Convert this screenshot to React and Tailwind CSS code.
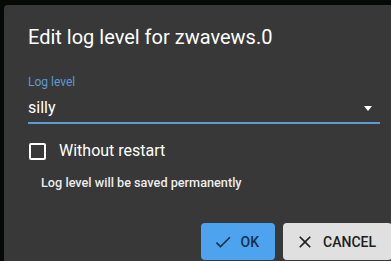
import React, { useState } from 'react';

function CheckIcon() {
  return (
    <svg viewBox="0 0 24 24" className="w-5 h-5" fill="currentColor">
      <path d="M9 16.17 4.83 12l-1.42 1.41L9 19 21 7l-1.41-1.41z" />
    </svg>
  );
}

function CloseIcon() {
  return (
    <svg viewBox="0 0 24 24" className="w-5 h-5" fill="currentColor">
      <path d="M19 6.41 17.59 5 12 10.59 6.41 5 5 6.41 10.59 12 5 17.59 6.41 19 12 13.41 17.59 19 19 17.59 13.41 12z" />
    </svg>
  );
}

export default function App() {
  const [noRestart, setNoRestart] = useState(false);

  return (
    <div
      className="w-[391px] h-[261px] overflow-hidden bg-[#060a06] pl-1 pt-[5px]"
      style={{ fontFamily: 'Roboto, "Liberation Sans", sans-serif' }}
    >
      {/* Dialog */}
      <div className="w-[400px] h-[300px] bg-[#383838] rounded-tl text-white">
        <h2 className="px-6 pt-4 pb-4 text-xl leading-8 font-normal">Edit log level for zwavews.0</h2>

        <div className="px-6">
          {/* Select */}
          <div className="mt-[5px] text-xs leading-4 text-[#5d9bd3]">Log level</div>
          <div className="flex items-center justify-between pt-[6px] pb-[2px] border-b-2 border-[#5d9bd3]">
            <span className="text-base leading-6">silly</span>
            <svg viewBox="0 0 8 5" className="w-2 h-[5px] mr-2" fill="#fff">
              <path d="M0 0h8L4 5z" />
            </svg>
          </div>

          {/* Checkbox */}
          <label className="mt-[15px] flex items-center h-6 cursor-pointer">
            <span
              className="ml-px w-[17px] h-[17px] border-2 border-white rounded-[2px]"
              onClick={() => setNoRestart(!noRestart)}
            />
            <span className="ml-[13px] text-base leading-6">Without restart</span>
          </label>

          <div className="mt-3 pl-[13px] text-[12.7px] leading-4 font-medium text-[#ececec]">
            Log level will be saved permanently
          </div>
        </div>

        {/* Actions */}
        <div className="mt-8 flex justify-end gap-2 pr-3">
          <button className="h-[37px] flex items-center pl-3 pr-4 rounded bg-[#4da3ee] text-[#16304c] text-sm font-medium">
            <CheckIcon />
            <span className="ml-2">OK</span>
          </button>
          <button className="h-[37px] flex items-center pl-3 pr-4 rounded bg-[#e0e0e0] text-[#202020] text-sm font-medium">
            <CloseIcon />
            <span className="ml-2">CANCEL</span>
          </button>
        </div>
      </div>
    </div>
  );
}
